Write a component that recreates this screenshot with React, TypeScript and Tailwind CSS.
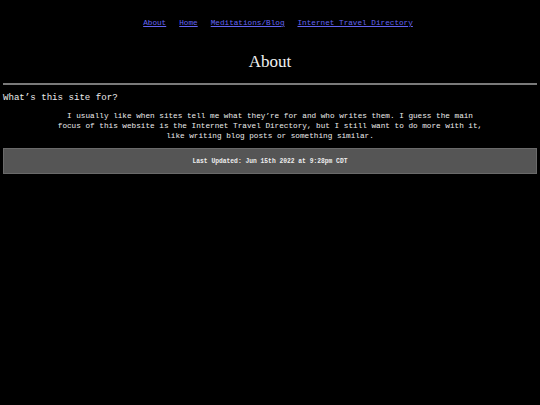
import React from "react";

export default function App() {
  const mono = "font-['Liberation_Mono','DejaVu_Sans_Mono',monospace]";
  return (
    <div className={`min-h-[405px] w-full bg-black px-[3px] text-[#ececec] ${mono}`}>
      <nav className="flex justify-center gap-[13px] pl-[16px] pt-[16px] text-[7.7px] leading-[14px]">
        <a href="#" className="text-[#6464f4] underline">About</a>
        <a href="#" className="text-[#6464f4] underline">Home</a>
        <a href="#" className="text-[#6464f4] underline">Meditations/Blog</a>
        <a href="#" className="text-[#6464f4] underline">Internet Travel Directory</a>
      </nav>
      <h1 className="mt-[22px] text-center font-['Liberation_Serif',serif] text-[17px] leading-[20px] text-[#f0f0f0]">
        About
      </h1>
      <div className="mt-[11px] h-[2px] w-full bg-[#7a7a7a]" />
      <h2 className="mt-[7px] text-[9.1px] leading-[12px] text-[#ececec]">What’s this site for?</h2>
      <p className="mx-auto mt-[8px] max-w-[430px] text-center text-[7.7px] leading-[9.8px]">
        I usually like when sites tell me what they’re for and who writes them. I guess the main
        focus of this website is the Internet Travel Directory, but I still want to do more with it,
        like writing blog posts or something similar.
      </p>
      <div className="mt-[7px] flex h-[26px] w-full items-center justify-center border border-[#6a6a6a] bg-[#555555]">
        <span className="text-[6.3px] font-bold text-[#eeeeee]">Last Updated: Jun 15th 2022 at 9:28pm CDT</span>
      </div>
    </div>
  );
}
